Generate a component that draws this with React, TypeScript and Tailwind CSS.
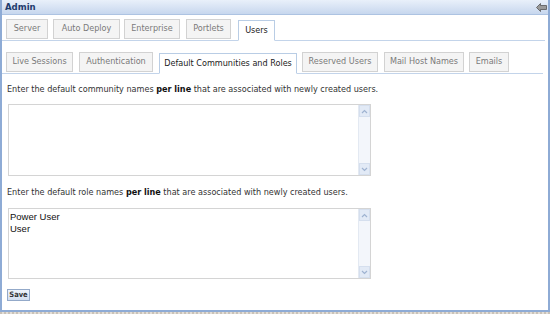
import React from "react";

const tahoma = { fontFamily: '"DejaVu Sans Condensed", "DejaVu Sans", Verdana, sans-serif' };

function Tab({ label, w, ml, selected }: { label: string; w: number; ml: number; selected?: boolean }) {
  return (
    <div
      style={{ width: w, marginLeft: ml }}
      className={
        selected
          ? "h-[21px] -mb-px flex items-center justify-center whitespace-nowrap border border-[#b9cde5] border-b-white bg-white text-[#222] text-[9px]"
          : "h-[20px] flex items-center justify-center whitespace-nowrap border border-[#d2d2d2] bg-[#f4f4f4] text-[#7a7a7a] text-[9px] mb-px"
      }
    >
      {label}
    </div>
  );
}

function Scrollbar() {
  return (
    <div className="w-[12px] h-full flex flex-col border-l border-[#e3e9f2] bg-[#f3f6fb]">
      <div className="h-[12px] flex items-center justify-center bg-[#e2eaf6] border border-[#d5dfee]">
        <svg width="7" height="5" viewBox="0 0 7 5">
          <path d="M1 4 L3.5 1.5 L6 4" fill="none" stroke="#9fb3d1" strokeWidth="1.2" />
        </svg>
      </div>
      <div className="flex-1" />
      <div className="h-[12px] flex items-center justify-center bg-[#e2eaf6] border border-[#d5dfee]">
        <svg width="7" height="5" viewBox="0 0 7 5">
          <path d="M1 1 L3.5 3.5 L6 1" fill="none" stroke="#9fb3d1" strokeWidth="1.2" />
        </svg>
      </div>
    </div>
  );
}

function Area({ lines, h }: { lines: string[]; h: number }) {
  return (
    <div style={{ height: h }} className="ml-[6px] w-[363px] flex border border-[#d4d4d4] bg-white">
      <div
        className="flex-1 px-[1px] pt-[2px] text-[9.5px] leading-[12px] text-[#111]"
        style={{ fontFamily: '"Liberation Sans", Arial, sans-serif' }}
      >
        {lines.map((l) => (
          <div key={l}>{l}</div>
        ))}
      </div>
      <Scrollbar />
    </div>
  );
}

export default function App() {
  return (
    <div className="w-[550px] h-[314px] bg-white overflow-hidden" style={tahoma}>
      <div className="h-[312px] flex flex-col border-l-2 border-r-2 border-b-2 border-[#8eabd5] bg-white">
        <div className="h-[15px] flex items-center justify-between pl-[3px] pr-[1px] bg-gradient-to-b from-[#e9f0fa] to-[#c7d7ee] border-b border-[#adc3e2]">
          <span className="text-[9.5px] font-bold text-[#1f3c6d] leading-none">Admin</span>
          <svg width="11" height="9" viewBox="0 0 11 9">
            <path d="M0.5 4.5 L4.5 0.5 L4.5 2.5 L10.5 2.5 L10.5 6.5 L4.5 6.5 L4.5 8.5 Z" fill="#9a9a9a" stroke="#555" strokeWidth="0.8" />
          </svg>
        </div>

        <div className="mt-[4px] mr-[3px] flex items-end border-b border-[#c3d4ea]">
          <Tab label="Server" w={42} ml={4} />
          <Tab label="Auto Deploy" w={67} ml={5} />
          <Tab label="Enterprise" w={56} ml={4} />
          <Tab label="Portlets" w={45} ml={6} />
          <Tab label="Users" w={37} ml={7} selected />
        </div>

        <div className="mt-[11px] mr-[5px] flex items-end border-b border-[#c3d4ea]">
          <Tab label="Live Sessions" w={67} ml={4} />
          <Tab label="Authentication" w={74} ml={6} />
          <Tab label="Default Communities and Roles" w={138} ml={6} selected />
          <Tab label="Reserved Users" w={76} ml={5} />
          <Tab label="Mail Host Names" w={80} ml={6} />
          <Tab label="Emails" w={40} ml={5} />
        </div>

        <div className="mt-[9px] ml-[5px] text-[9px] leading-[12px] text-[#333] whitespace-nowrap">
          Enter the default community names <b className="text-[#111]">per line</b> that are associated with newly created users.
        </div>
        <div className="mt-[9px]">
          <Area lines={[]} h={72} />
        </div>

        <div className="mt-[10px] ml-[5px] text-[9px] leading-[12px] text-[#333] whitespace-nowrap">
          Enter the default role names <b className="text-[#111]">per line</b> that are associated with newly created users.
        </div>
        <div className="mt-[10px]">
          <Area lines={["Power User", "User"]} h={71} />
        </div>

        <div className="mt-[10px] ml-[5px]">
          <button
            className="h-[12px] w-[23px] flex items-center justify-center border border-[#93a9c9] bg-gradient-to-b from-[#eef3fb] to-[#d3def0] text-[7.5px] font-bold text-[#333] leading-none"
          >
            Save
          </button>
        </div>
      </div>
      <div className="h-[2px] bg-[repeating-linear-gradient(90deg,#c9c2b8_0px,#c9c2b8_2px,#e2ddd6_2px,#e2ddd6_4px)]" />
    </div>
  );
}
